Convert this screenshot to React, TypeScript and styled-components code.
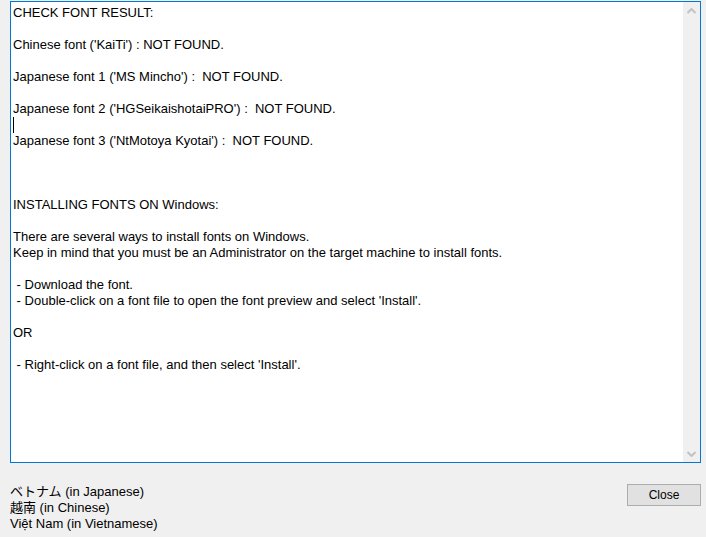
import React from "react";
import styled, { createGlobalStyle } from "styled-components";

const Global = createGlobalStyle`
  html, body { margin: 0; padding: 0; background: #f0f0f0; }
  body { font-family: "Liberation Sans", Arial, sans-serif; }
`;

const Window = styled.div`
  width: 706px;
  height: 537px;
  box-sizing: border-box;
  padding: 1px 5px 0 10px;
  display: flex;
  flex-direction: column;
  background: #f0f0f0;
  overflow: hidden;
`;

const TextBox = styled.div`
  height: 462px;
  box-sizing: border-box;
  border: 1px solid #0078d7;
  background: #fff;
  display: flex;
`;

const Content = styled.div`
  flex: 1;
  padding: 3px 2px 0 2px;
  font-size: 13px;
  line-height: 16px;
  color: #000;
  white-space: pre;
  overflow: hidden;
`;

const Line = styled.div`
  height: 16px;
`;

const Caret = styled.span`
  display: inline-block;
  width: 1px;
  height: 16px;
  background: #000;
  vertical-align: top;
`;

const ScrollBar = styled.div`
  width: 17px;
  background: #f0f0f0;
  display: flex;
  flex-direction: column;
  justify-content: space-between;
  align-items: center;
`;

const Arrow = styled.div`
  width: 17px;
  height: 17px;
  display: flex;
  align-items: center;
  justify-content: center;
`;

const Footer = styled.div`
  display: flex;
  justify-content: space-between;
  align-items: flex-start;
  padding-top: 21px;
`;

const Labels = styled.div`
  font-size: 13px;
  line-height: 16px;
  color: #000;
  font-family: "Liberation Sans", "Noto Sans CJK JP", Arial, sans-serif;
`;

const CloseButton = styled.button`
  width: 74px;
  height: 22px;
  box-sizing: border-box;
  border: 1px solid #adadad;
  background: #e1e1e1;
  font-family: "Liberation Sans", Arial, sans-serif;
  font-size: 12px;
  color: #000;
  padding: 0;
  margin: 0;
`;

const lines: string[] = [
  "CHECK FONT RESULT:",
  "",
  "Chinese font ('KaiTi') : NOT FOUND.",
  "",
  "Japanese font 1 ('MS Mincho') :  NOT FOUND.",
  "",
  "Japanese font 2 ('HGSeikaishotaiPRO') :  NOT FOUND.",
  "__CARET__",
  "Japanese font 3 ('NtMotoya Kyotai') :  NOT FOUND.",
  "",
  "",
  "",
  "INSTALLING FONTS ON Windows:",
  "",
  "There are several ways to install fonts on Windows.",
  "Keep in mind that you must be an Administrator on the target machine to install fonts.",
  "",
  " - Download the font.",
  " - Double-click on a font file to open the font preview and select 'Install'.",
  "",
  "OR",
  "",
  " - Right-click on a font file, and then select 'Install'.",
];

const Chevron = ({ up }: { up?: boolean }) => (
  <svg width="9" height="6" viewBox="0 0 9 6">
    <path
      d={up ? "M0.5 5 L4.5 1 L8.5 5" : "M0.5 1 L4.5 5 L8.5 1"}
      fill="none"
      stroke="#c2c2c2"
      strokeWidth="2"
    />
  </svg>
);

export default function App() {
  return (
    <>
      <Global />
      <Window>
        <TextBox>
          <Content>
            {lines.map((l, i) => (
              <Line key={i}>{l === "__CARET__" ? <Caret /> : l}</Line>
            ))}
          </Content>
          <ScrollBar>
            <Arrow>
              <Chevron up />
            </Arrow>
            <Arrow>
              <Chevron />
            </Arrow>
          </ScrollBar>
        </TextBox>
        <Footer>
          <Labels>
            <div>ベトナム (in Japanese)</div>
            <div>越南 (in Chinese)</div>
            <div>Việt Nam (in Vietnamese)</div>
          </Labels>
          <CloseButton>Close</CloseButton>
        </Footer>
      </Window>
    </>
  );
}
